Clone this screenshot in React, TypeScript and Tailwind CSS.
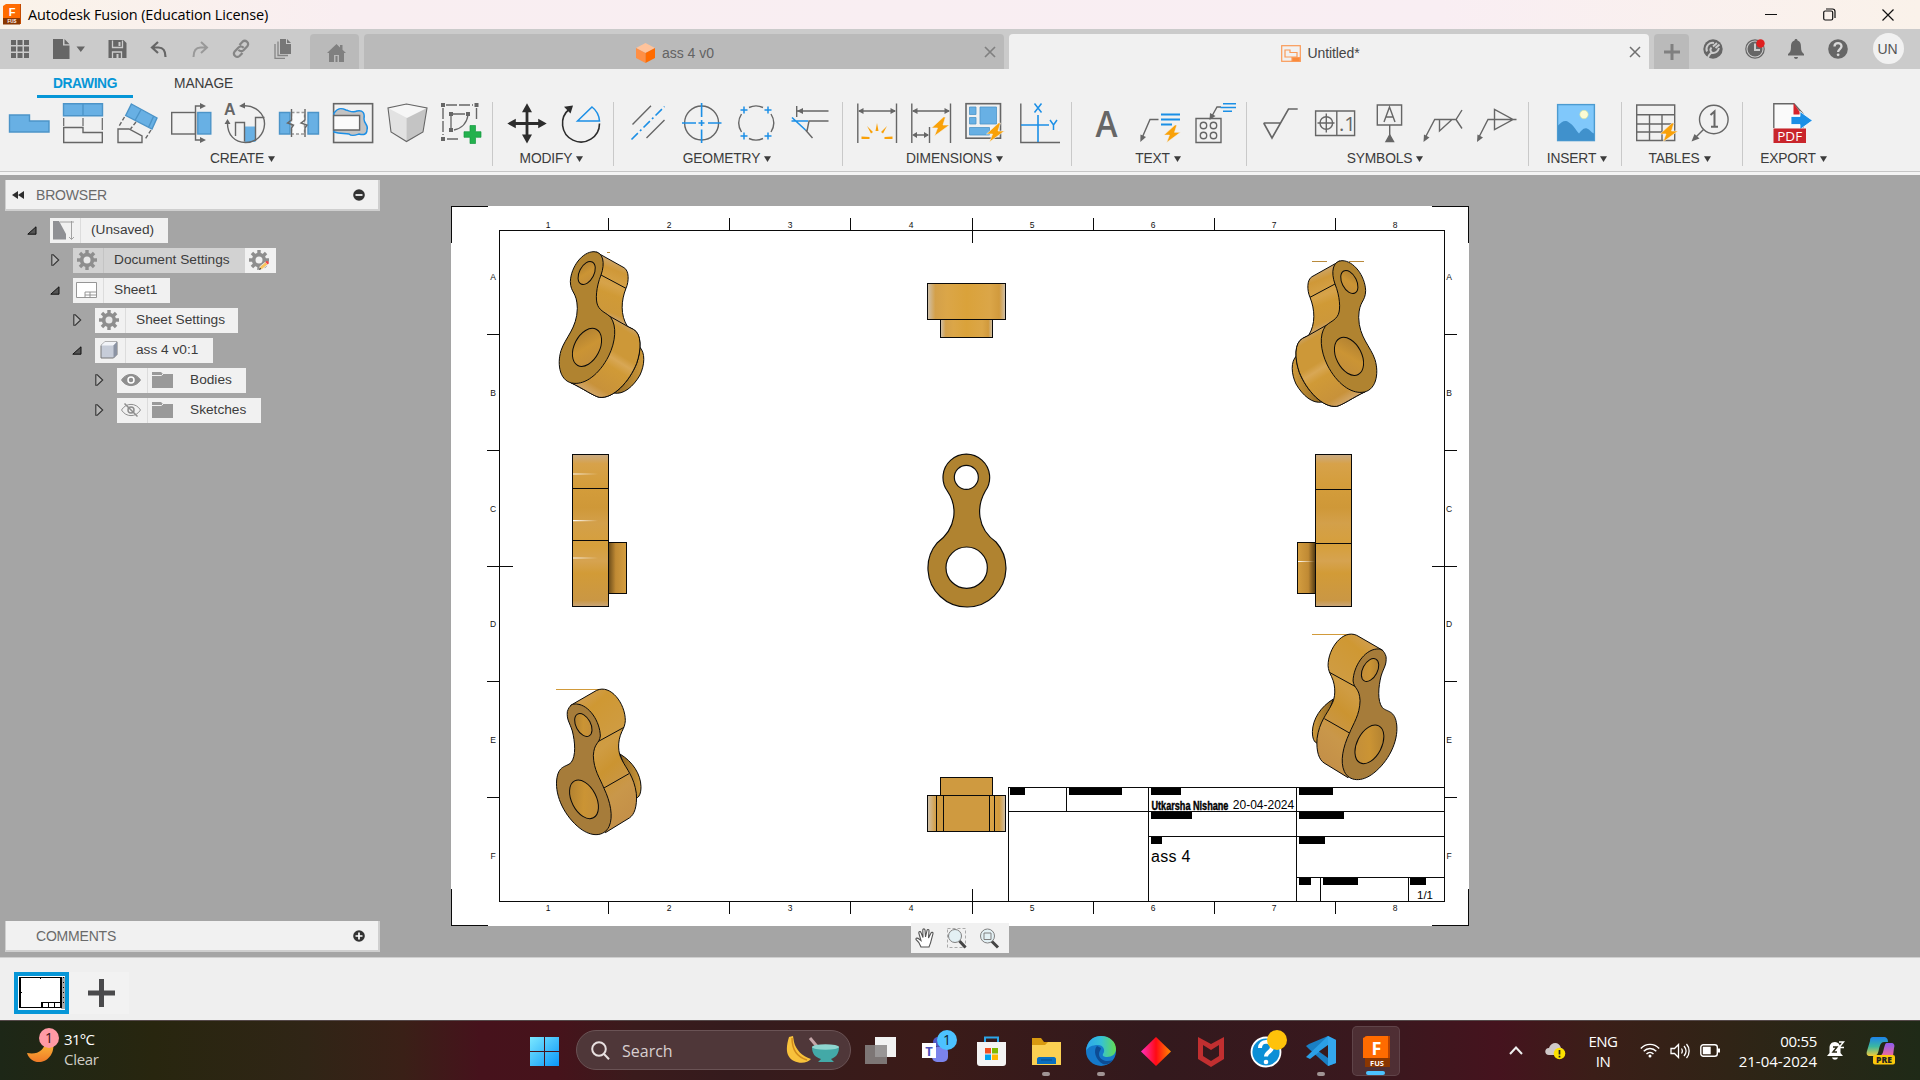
import React from "react";

type Kids = { children?: React.ReactNode };

const G = "#666666";
const B = "#1b8fe6";
const F = "#68b0e4";

/* 40 × 40 ribbon icon centred in its 54px slot */
function Tool({ children }: Kids) {
  return (
    <div className="flex h-[42px] w-[54px] shrink-0 items-center justify-center">
      <svg width="40" height="40" viewBox="0 0 40 40" fill="none" stroke={G} strokeWidth="1.4" className="overflow-visible">
        {children}
      </svg>
    </div>
  );
}

function Group({ label, width, icons = "pl-[7px]", shift = "", last = false, children }: Kids & { label: string; width: string; icons?: string; shift?: string; last?: boolean }) {
  return (
    <div className={`${width} ${last ? "" : "border-r"} h-16 shrink-0 border-[#c9c9c9]`}>
      <div className={`flex ${icons}`}>{children}</div>
      <div className={`mt-[5px] flex h-5 items-center justify-center gap-1 text-[13.8px] tracking-[-0.15px] text-[#3c3c3c] ${shift}`}>
        {label}
        <svg width="7" height="6" viewBox="0 0 7 6"><path d="M0 .3h7L3.5 6z" fill="#3c3c3c" /></svg>
      </div>
    </div>
  );
}

const Bolt = ({ x = 0, y = 0, s = 1 }: { x?: number; y?: number; s?: number }) => (
  <path transform={`translate(${x} ${y}) scale(${s})`} d="M13 0 1 11h6L4 19 19 8h-6.5L15 0z" fill="#f9a109" stroke="#f1f1f1" strokeWidth=".6" />
);

function Ribbon() {
  return (
    <div className="flex h-[73px] pl-[1px] pt-[4px]">
      <Group label="CREATE" width="w-[492px]" icons="pl-[1px]" shift="pr-[8px]">
        <Tool><path d="M.5 12h20v6H40v11H.5z" fill={F} stroke="#4c94c8" /></Tool>
        <Tool>
          <path d="M.5.8h39v12H.5zM20 .8v12" fill={F} stroke="#4c94c8" />
          <path d="M.7 15v8M20 15v8M39.3 15v12" strokeWidth="1.2" />
          <path d="M.7 24.5H20v5h19.3v10H.7z" />
        </Tool>
        <Tool>
          <path d="M14.4 1 40 15l-5 11L8.7 12.5zM23.8 7 18 17.5M36.5 13.5l-5 11" fill={F} stroke="#4c94c8" />
          <path d="M1 26h11l13 7v6.5H1z" />
          <path d="m7.5 14-6 10M19 19l-5.5 7M34 27l-6 9.5" strokeDasharray="4 2" />
        </Tool>
        <Tool>
          <rect x=".7" y="9.5" width="23.8" height="21.5" />
          <rect x="26.8" y="9.5" width="13" height="21.5" fill={F} stroke="#4c94c8" />
          <path d="M32 3h-7.5v34H32" /><path d="m29 0 6 3-6 3zM29 34l6 3-6 3z" fill={G} stroke="none" />
        </Tool>
        <Tool>
          <text x="-1" y="12" fontSize="16" fontWeight="700" fill={G} stroke="none">A</text>
          <path d="M19.5 23.5h11V39h-11z" fill={F} stroke="none" />
          <path d="M16 3c14-2 24 8 23.5 18.5C39 32 31 39.5 20.5 39.5S2 32 2.5 19" />
          <path d="M10.5 33V19.5h9v19M30.5 38V14.5h9" />
          <path d="m14 3 6-3.5v6zM-.5 21l3-5 3 5z" fill={G} stroke="none" />
        </Tool>
        <Tool>
          <path d="M.5 9.500h10.500v21.500H.5zM29 9.500h10.500v21.500H29z" fill={F} stroke="#4c94c8" />
          <path d="M12.500 9.500h13v21.500h-13z" fill="#fafafa" stroke="#999" strokeDasharray="3 2" />
          <path d="M12.500 6v11l-4 3 6 2-2 3v9M26 6v11l-4 3 6 2-2 3v9" />
        </Tool>
        <Tool>
          <rect x=".6" y=".7" width="39" height="38.8" strokeWidth="1.6" />
          <path d="M1 10C5 4 9 5 13 7c4 1 7 3 11 1 6-1 8 2 7 8 0 5 5 6 3 11 0 5-4 5-8 4-3 1-7 3-10 0-4-1-9 0-15-2z" fill="#c3c3c3" stroke={B} />
          <path d="M.6 12.500h26v14.500H.6z" fill="#fbfbfb" />
        </Tool>
        <Tool>
          <path d="M19.500 1 1 5l3 24 15.500 9.500z" fill="#e2e2e2" stroke="none" /><path d="M19.500 1 40 5l-4 24-16.500 9.500z" fill="#c4c4c4" stroke="none" />
          <path d="M19.500 1 1 5l19 10L40 5z" fill="#f6f6f6" stroke="none" />
          <path d="M19.500 1 1 5l3 24 15.500 9.500L36 29l4-24z" strokeWidth="1.1" />
        </Tool>
        <Tool>
          <path d="M5 2h27M2 5v27M35.500 5v12M6 36h13" strokeDasharray="11 2" /><path d="M12 11h12M10 13v12M27 12c-1 7-5 13-14 15" strokeWidth="1.3" />
          <path d="M0 0h4v4H0zM33.500 0h4v4h-4zM0 34h4v4H0zM8 9h4v4H8zM25 9h4v4h-4zM8 25h4v4H8z" fill={G} stroke="none" />
          <path d="M29 22.500h5.500v6.200H40v5.600h-5.500v6.200H29v-6.200h-6v-5.600h6z" fill="#23b14d" stroke="#159a40" strokeWidth=".7" />
        </Tool>
      </Group>
      <Group label="MODIFY" width="w-[121px]" shift="pr-[3px]">
        <Tool>
          <path d="M20 4v33M4 20.500h32" stroke="#2d2d2d" strokeWidth="2.8" />
          <path d="m20 .3 5 9H15zM20 40.500l5-9H15zM.3 20.500l8.500-4.700v9.400zM39.700 20.500l-8.500-4.700v9.400z" fill="#2d2d2d" stroke="none" />
        </Tool>
        <Tool>
          <path d="M38.500 20.500a18.500 18.500 0 1 1-30-14.500" stroke="#2d2d2d" strokeWidth="1.6" /><path d="m3 3.800 9-1.300-2.500 8z" fill="#2d2d2d" stroke="none" />
          <path d="M16.500 18 31 4c4 3 7 8 7.500 14z" stroke={B} strokeWidth="1.5" />
        </Tool>
      </Group>
      <Group label="GEOMETRY" width="w-[229px]" shift="pr-[2px]">
        <Tool><path d="M4.500 21.500 23 2.800M18.500 35l18-18" /><path d="m3.500 36.500 33-33" stroke={B} strokeDasharray="9 3 2 3" strokeWidth="1.6" /></Tool>
        <Tool><circle cx="19.6" cy="20" r="17" /><path d="M19.600 0v14M19.600 26.500V40M0 20h14M26 20h13.500M16.500 20h6M19.600 17v6" stroke={B} strokeWidth="1.6" /></Tool>
        <Tool>
          <path d="M13 4.500a17 17 0 0 1 14 0M35 11a17 17 0 0 1 0 18M27 35.500a17 17 0 0 1-14 0M5.500 29a17 17 0 0 1 0-18" />
          <path d="M8 3.500v7M4.500 7h7M32 3.500v7M28.500 7h7M8 29.500v7M4.500 33h7M32 29.500v7M28.500 33h7" stroke={B} strokeWidth="1.5" />
        </Tool>
        <Tool>
          <path d="M6.700 3v11M7 8h31.500M38.500 18H19l-2 10M15.500 27l7 8" /><path d="m7 8 6-3v6z" fill={G} stroke="none" />
          <path d="M1.500 18H18M2 14.500 15.500 27" stroke={B} strokeWidth="1.6" />
        </Tool>
      </Group>
      <Group label="DIMENSIONS" width="w-[229px]" shift="pr-[5px]">
        <Tool>
          <path d="M.8.5v39.500M39.500.5v39.500M2 8h36" /><path d="m1 8 5.500-3v6zM39 8l-5.500-3v6z" fill={G} stroke="none" />
          <g fill="#f9a109" stroke="none"><path d="M20 20l1.500 8h-3zM10 23l6 6-2 1.500zM30 23l-4 7.500-2-1.500zM4.500 33.500l8 .5v2h-8zM35.500 33.500l-8 .5v2h8z" /></g>
        </Tool>
        <Tool>
          <path d="M.8.5v39.500M39.500.5v39.500M2 8h36M18.500 24v16M3 32h14" /><path d="m1 8 5.500-3v6zM39 8l-5.500-3v6zM1 32l5-3v6zM18 32l-5-3v6z" fill={G} stroke="none" /><Bolt x={19.5} y={14} />
        </Tool>
        <Tool>
          <rect x="1" y=".7" width="34.5" height="34.5" strokeWidth="1.6" />
          <path d="M4.500 4h6.500v7.500H4.500zM4.500 14.500h6.500V21H4.500zM15 4h16.500v17H15zM4.500 24.500h20V32h-20z" fill={F} stroke="#4c94c8" strokeWidth=".8" /><Bolt x={20.5} y={20} />
        </Tool>
        <Tool>
          <path d="M1.800.5v39H41" /><path d="M19 12v27M2 22h28" stroke={B} strokeWidth="1.6" />
          <path d="m15.500.5 7 9M22.500.5l-7 9M31 17l3.500 5 3.500-5M34.500 22v5" stroke={B} strokeWidth="1.5" />
        </Tool>
      </Group>
      <Group label="TEXT" width="w-[175px]" shift="pr-[2px]">
        <Tool><text x="20.5" y="33.5" textAnchor="middle" fontSize="36" fontWeight="600" fill={G} stroke="none" textLength="22" lengthAdjust="spacingAndGlyphs" className="font-['Open_Sans']">A</text></Tool>
        <Tool>
          <path d="m2 35 8-18.500h8.500" /><path d="m.3 39 .2-7.500 5.500 2.500z" fill={G} stroke="none" />
          <path d="M21 11.500h19M21 16.500h19M21 21.500h11" stroke={B} strokeWidth="2" /><Bolt x={23} y={22} s={0.92} />
        </Tool>
        <Tool>
          <path d="M2 15.500h25v24H2zM27 4h-4l-5 9" /><path d="m15.500 17 .5-7 5.500 3z" fill={G} stroke="none" />
          <circle cx="9.5" cy="22.5" r="3.2" /><circle cx="19.5" cy="22.5" r="3.2" /><circle cx="9.5" cy="32.5" r="3.2" /><circle cx="19.5" cy="32.5" r="3.2" />
          <path d="M29 .8h13M26.500 4.500h15.500M29 8.200h9" stroke={B} strokeWidth="1.5" />
        </Tool>
      </Group>
      <Group label="SYMBOLS" width="w-[282px]" shift="pr-[5px]">
        <Tool><path d="M2.700 20h17M2.700 20 11 35 27.500 6h9.200" strokeWidth="1.6" /></Tool>
        <Tool>
          <path d="M.6 8h39v24.500H.6zM21.800 8v24.500M2.500 20h17M11.300 10.500v19" /><circle cx="11.3" cy="20" r="6.3" />
          <text x="24" y="28" fontSize="20" fill={G} stroke="none" className="font-['Open_Sans']">.1</text>
        </Tool>
        <Tool><path d="M8.300 2h24.300v20H8.300zM20.700 22v12M15 19l5.500-15L26 19M17 14h7" /><path d="m17 38.500 3.700-6.500 3.800 6.500z" fill={G} /></Tool>
        <Tool><path d="m2 35 9.700-18.500H33L39 7M33 16.500l6 9M16.500 17v11l12-11" /><path d="m.5 39 .5-7.500 5.500 3z" fill={G} stroke="none" /></Tool>
        <Tool><path d="m1.500 35 9.500-18.500h28.500M17.500 6.500v20l18.500-10z" /><path d="m0 39 .5-7.500 5.500 3z" fill={G} stroke="none" /></Tool>
      </Group>
      <Group label="INSERT" width="w-[93px]" icons="pl-[20px]" shift="pl-[4px]">
        <Tool>
          <rect x="1.6" y="1.6" width="36.8" height="36" fill="#80c8fb" stroke="#4c9bd0" /><circle cx="28" cy="11.5" r="4.2" fill="#fbfbd4" stroke="#cfe0a0" strokeWidth=".6" />
          <path d="M2 22.500c4-4 7-6 11-3 5 3 7 8 10 11 2-2 4-6 8-5 3 1 4 4 7 5v7H2z" fill="#4091cc" stroke="none" />
        </Tool>
      </Group>
      <Group label="TABLES" width="w-[121px]" icons="pl-[6px]" shift="pr-[5px]">
        <Tool><path d="M1.700 2h38v35.500h-38zM1.700 11.800h38M1.700 21h38M1.700 29h38M14.500 11.800v25.700M27 11.800v25.700" /><Bolt x={24} y={20} /></Tool>
        <Tool>
          <circle cx="24.8" cy="16.5" r="14.3" /><path d="M14.500 26.500 5 36" /><path d="m2.500 38.500 3-7.500 5 4.500z" fill={G} stroke="none" />
          <path d="m21.500 12 4-3.500v15M22 23.800h7" strokeWidth="2" />
        </Tool>
      </Group>
      <Group label="EXPORT" width="w-[98px]" icons="pl-[22px]" shift="pl-[3px]" last>
        <Tool>
          <path d="M1.800 25V.8H22l9 10V25" fill="#fafafa" /><path d="M21.500 0v11.500h8z" fill="#d8232a" stroke="none" />
          <path d="M19 13.500h9V8.500l12.500 9-12.500 9v-5h-9z" fill="#1b8fe6" stroke="#fff" strokeWidth=".8" />
          <path d="M1.500 25.500H34V40H1.500z" fill="#c9252b" stroke="none" />
          <text x="17.7" y="37.8" fontSize="13.5" textAnchor="middle" fill="#fff" stroke="none" className="font-['Open_Sans']">PDF</text>
        </Tool>
      </Group>
    </div>
  );
}

const QIcon = ({ children }: Kids) => (
  <div className="flex w-[41.5px] items-center justify-center">
    <svg width="20" height="20" viewBox="0 0 20 20" fill="none">{children}</svg>
  </div>
);

function TabBar() {
  return (
    <div className="flex h-10 items-start bg-[#cbcbcb]">
      <div className="flex h-10 w-[310px] items-center">
        <div className="flex w-10 justify-center">
          <svg width="18" height="18" viewBox="0 0 18 18" fill="#666"><path d="M0 0h5v5H0zM6.500 0h5v5h-5zM13 0h5v5h-5zM0 6.500h5v5H0zM6.500 6.500h5v5h-5zM13 6.500h5v5h-5zM0 13h5v5H0zM6.500 13h5v5h-5zM13 13h5v5h-5z" /></svg>
        </div>
        <div className="w-[56px] pl-[13px]">
          <svg width="33" height="20" viewBox="0 0 33 20" fill="#666"><path d="M0 0h10v6.500h6.500V20H0zM11.500 0l5 5.200h-5zM23.500 7.500h8.500l-4.200 5.500z" /></svg>
        </div>
        <QIcon><path d="M1.500 1h15l3 3v15h-18z" fill="#666" /><path d="M5.500 1.500v7h10v-7M5.500 19v-6h9v6" stroke="#cbcbcb" strokeWidth="1.3" /><path d="M11.500 3h2v4h-2zM9.500 15h2v4h-2z" fill="#cbcbcb" /></QIcon>
        <QIcon><path d="M10 3 4 8.500l6 5.500M4.500 8.500h6c5 0 7 4 7 9.500" stroke="#666" strokeWidth="2.2" /></QIcon>
        <QIcon><path d="m11 3 6 5.500L11 14M16.500 8.500h-6c-5 0-7 4-7 9.500" stroke="#999" strokeWidth="2" /></QIcon>
        <QIcon><path d="m8.500 6 3-3.300c3-2.500 7 1 5 4.300l-4 4.200c-1.500 1.500-4 1.300-5-.4M11.500 14l-3 3c-3 2.500-7-1-5-4.300l4-4.200c1.500-1.500 4-1.300 5 .4" stroke="#858585" strokeWidth="2.2" /></QIcon>
        <QIcon><path d="M7 0h6v5h5v10H7zM14 0l4 4h-4z" fill="#777" /><path d="M5 2.500v14h10M2 5v14.300h10" stroke="#858585" strokeWidth="1.3" /></QIcon>
      </div>
      <div className="mt-[5px] flex h-[35px] w-[49px] items-center justify-center rounded-t-[4px] bg-[#bababa] pl-[3px] pt-[3px]">
        <svg width="19" height="18" viewBox="0 0 19 18" fill="#808080"><path d="M9.500 0 0 9h2v9h5v-7h5v7h5V9h2L15.500 5.700V1H13v2.500zM8.500 12h2v6h-2z" /></svg>
      </div>
      <div className="ml-[5px] mt-[5px] flex h-[35px] w-[640px] items-center rounded-t-[4px] bg-[#bababa] pt-[3px]">
        <div className="flex flex-1 items-center justify-center gap-[7px] pl-[2px] text-sm text-[#636363]">
          <svg width="19" height="20" viewBox="0 0 19 20"><path d="m9.500 0 9.500 5-9.500 5L0 5z" fill="#ffc39b" /><path d="M0 5l9.500 5v10L0 15z" fill="#ff8f45" /><path d="m19 5-9.500 5v10l9.500-5z" fill="#ff6b00" /></svg>
          ass 4 v0
        </div>
        <svg className="mb-[2px] mr-[8px]" width="12" height="12" viewBox="0 0 12 12"><path d="m1 1 10 10M11 1 1 11" stroke="#808080" strokeWidth="1.7" /></svg>
      </div>
      <div className="ml-[5px] mt-[5px] flex h-[35px] w-[640px] items-center rounded-t-[4px] bg-[#f1f1f1] pt-[3px]">
        <div className="flex flex-1 items-center justify-center gap-[6px] pl-[3px] text-sm tracking-[-0.1px] text-[#454545]">
          <svg width="20" height="17" viewBox="0 0 20 17" fill="none" stroke="#fa9a57" strokeWidth="1.2"><rect x=".7" y=".7" width="18.6" height="15.6" /><path d="M4 5h5v2.500h7V12H4z" /><path d="M11 12.500h8v4h-8z" fill="#fa8a3c" /></svg>
          Untitled*
        </div>
        <svg className="mb-[2px] mr-[8px]" width="12" height="12" viewBox="0 0 12 12"><path d="m1 1 10 10M11 1 1 11" stroke="#707070" strokeWidth="1.5" /></svg>
      </div>
      <div className="ml-[5px] mt-[5px] flex h-[35px] w-[35px] items-center justify-center rounded-t-[4px] bg-[#bababa]">
        <svg width="16" height="16" viewBox="0 0 16 16"><path d="M8 0v16M0 8h16" stroke="#808080" strokeWidth="3" /></svg>
      </div>
      <div className="flex h-10 items-center pl-[3.5px]">
        <QIcon><circle cx="10" cy="10" r="9.7" fill="#666" /><path d="M4 12.500C2 8 6 2.500 11 4M16.500 5.500 12.500 9M14 4l-4 3.500M8.500 8.500c-2 2-1 5 1.500 5.500 3 0 5-2 6-5M9 13c-2 2-4 3-4 6" stroke="#cbcbcb" strokeWidth="2" /></QIcon>
        <QIcon><circle cx="10" cy="10" r="9.2" stroke="#666" strokeWidth="1.2" /><circle cx="10" cy="10" r="7.5" fill="#666" /><path d="M10 4.500V11h5" stroke="#cbcbcb" strokeWidth="2" /><circle cx="15.5" cy="4.5" r="4.2" fill="#e02020" /></QIcon>
        <QIcon><path d="M10 0c-1 0-1.500.6-1.500 1.500C5.500 2.500 5 5 5 8c0 4-1 5.500-3 7v1.500h16V15c-2-1.500-3-3-3-7 0-3-.5-5.500-3.500-6.500C11.500.6 11 0 10 0zM8 18h4c0 2.500-4 2.500-4 0z" fill="#666" /></QIcon>
        <QIcon><circle cx="10" cy="10" r="9.8" fill="#666" /><path d="M6.500 7.500C6.500 3 13.500 3 13.500 7.300c0 2.700-3.400 2.800-3.400 5.700" stroke="#d9d9d9" strokeWidth="2.3" /><circle cx="10.1" cy="15.8" r="1.4" fill="#d9d9d9" /></QIcon>
      </div>
      <div className="ml-[14px] mt-[4px] flex h-[31px] w-[31px] items-center justify-center rounded-full bg-[#f1f1f1] pr-px text-sm text-[#555]">UN</div>
    </div>
  );
}

/* ---------- browser tree ---------- */

const Gear = ({ edit = false }: { edit?: boolean }) => (
  <svg width="20" height="20" viewBox="0 0 20 20">
    <g fill="#8e8e8e"><path d="M8.300 0h3.400v20H8.300zM0 8.300h20v3.400H0z" /><path d="M8.300 0h3.400v20H8.300zM0 8.300h20v3.400H0z" transform="rotate(45 10 10)" /><circle cx="10" cy="10" r="7.2" /></g>
    <circle cx="10" cy="10" r="3.5" fill={edit ? "#f1f1f1" : "#e8e8e8"} />
    {edit && <g transform="translate(1 1)"><path d="m9 19 1-3.500L15.500 11l2.200 2.500L12.500 18z" fill="#f8c35c" stroke="#f1f1f1" strokeWidth=".8" /><path d="m15.300 11 1.200-1c1.300-.5 2.700 1 2.200 2.200l-1 1.200z" fill="#ef4444" /><path d="m9 19 .8-2.400 1.600 1.500z" fill="#333" /></g>}
  </svg>
);
const Folder = () => <svg width="21" height="16" viewBox="0 0 21 16"><path d="M0 0h9l2 2h10v14H0z" fill="#999" /><path d="M0 3.500h9.500L11 2" stroke="#efefef" fill="none" /></svg>;
const Eye = ({ off = false }: { off?: boolean }) => (
  <svg width="20" height="14" viewBox="0 0 20 14" fill="none">
    <path d="M.5 7C5-.5 15-.5 19.500 7 15 14.500 5 14.500.5 7z" fill={off ? "none" : "#8e8e8e"} stroke="#8e8e8e" />
    <circle cx="10" cy="7" r="3" stroke={off ? "#8e8e8e" : "#fff"} strokeWidth="1.5" />
    {off && <path d="m3.500.5 13 13" stroke="#8e8e8e" strokeWidth="1.5" />}
  </svg>
);
const DocIcon = () => <svg width="21" height="19" viewBox="0 0 21 19"><path d="M0 0h6l7 13v5.500H0z" fill="#8f9094" /><path d="M7 1h14M18.500 0v18M16 16l2.500 2.500L21 16" stroke="#9a9a9a" strokeWidth=".9" fill="none" /></svg>;
const SheetIcon = () => <svg width="21" height="16" viewBox="0 0 21 16" fill="#fff" stroke="#8a8a8a" strokeWidth=".9"><path d="M.5.5h20v15H.5zM9 15.500V10h11.500M9 13h11.500M14 10v5.500" /></svg>;
const CubeIcon = () => <svg width="18" height="18" viewBox="0 0 18 18"><path d="M1 4.500 5 .8h12v12.700L13.500 17H1z" fill="#c6ccd8" stroke="#777" /><path d="M1 4.500 5 .8h12l-3.500 3.700z" fill="#f2f4f8" /><path d="m13.500 4.500 3.500-3.700v12.700L13.500 17z" fill="#8b93a3" /></svg>;

function Arrow({ open }: { open: boolean }) {
  return open ? (
    <svg width="10" height="9" viewBox="0 0 10 9"><path d="M9 .8v7.400H.8z" fill="#555" stroke="#111" /></svg>
  ) : (
    <svg width="9" height="12" viewBox="0 0 9 12"><path d="M.8.8v10.400h1.500L7.700 6 2.300.8z" fill="#b5b5b5" stroke="#333" strokeWidth="1.1" /></svg>
  );
}

function Row({ pad, open, icon, second, label, width, grey, extra }: { pad: string; open: boolean; icon: React.ReactNode; second?: React.ReactNode; label: string; width: string; grey?: boolean; extra?: React.ReactNode }) {
  return (
    <div className={`flex h-[30px] items-center ${pad}`}>
      <div className={`w-[23px] ${open ? "" : "pl-px"}`}><Arrow open={open} /></div>
      <div className={`flex h-[25px] items-center ${width} ${grey ? "bg-[#d2d2d2]" : "bg-[#f1f1f1]"}`}>
        <div className={`flex h-full w-[31px] items-center justify-center border-r pr-[3px] ${grey ? "border-[#c4c4c4]" : "border-[#dcdcdc]"}`}>{icon}</div>
        {second && <div className="w-[32px] pl-[4px]">{second}</div>}
        <span className="whitespace-nowrap pl-[10px] text-[13.7px] text-[#3c3c3c]">{label}</span>
      </div>
      {extra && <div className="flex h-[25px] w-[31px] items-center justify-center bg-[#f1f1f1] pr-[3px]">{extra}</div>}
    </div>
  );
}

function Panel({ title, chevron, minus }: { title: string; chevron?: boolean; minus?: boolean }) {
  return (
    <div className="flex h-[31px] w-[375px] items-center border-b-2 border-r-2 border-l border-[#cfcfcf] bg-[#f1f1f1] text-sm tracking-[-0.2px] text-[#6a6a6a]">
      <div className="w-[30px] pl-[6px]">
        {chevron && <svg width="12" height="8" viewBox="0 0 12 8"><path d="M6 0v8L0 4zM12 0v8L6 4z" fill="#2d2d2d" /></svg>}
      </div>
      <div className="flex-1 pt-px">{title}</div>
      <svg className="mr-[13px] mt-px" width="12" height="12" viewBox="0 0 12 12"><circle cx="6" cy="6" r="5.8" fill="#333" /><path d={minus ? "M2.5 6h7" : "M2.5 6h7M6 2.5v7"} stroke="#fff" strokeWidth="1.7" /></svg>
    </div>
  );
}

/* ---------- drawing sheet ---------- */

const INK = "#0a0a0a";

function UpperIso() {
  return (
    <g stroke={INK} strokeWidth="3" strokeLinejoin="round">
      <path d="M598 440C617 458 614 495 600 525C580 560 550 585 522 579L510 560Z" fill="url(#boss)" />
      <path d="M468 156L552 203C568 212 567 245 558 265C543 302 541 345 562 379L580 388C606 402 604 450 590 490C568 545 520 597 478 592C460 588 430 566 392 548L420 300Z" fill="url(#neck)" />
      <path d="M490 338L566 381L580 388C606 402 604 450 590 490C568 545 520 597 478 592C460 588 430 566 392 548Z" fill="url(#side)" stroke="none" />
      <path d="M483 225L558 265M490 338L566 381L580 388C606 402 604 450 590 490C568 545 520 597 478 592C460 588 430 566 392 548" fill="none" />
      <path d="M462 155C490 155 496 190 483 225C468 262 466 300 473 316C481 335 502 340 512 352C531 378 527 425 506 468C477 525 435 553 402 550C360 547 350 495 363 452C376 412 411 385 412 325C411 275 392 280 391 245C393 200 427 155 462 155Z" fill="#b08330" />
      <ellipse cx="440" cy="219" rx="22" ry="37" transform="rotate(27 440 219)" fill="url(#bore)" />
      <ellipse cx="441" cy="442" rx="38" ry="61" transform="rotate(27 441 442)" fill="url(#bore)" />
    </g>
  );
}

function LowerIso() {
  return (
    <g stroke={INK} strokeWidth="3" strokeLinejoin="round">
      <path d="M540 402C578 425 602 462 603 500C603 520 598 532 588 535L560 460Z" fill="url(#boss)" />
      <path d="M392 256L470 211C512 192 556 250 556 302C555 315 552 322 546 334C531 365 534 400 546 420C560 448 582 470 589 520C592 560 583 584 568 594L496 638L430 400Z" fill="url(#side2)" />
      <path d="M472 366L552 322M490 505L567 461" fill="none" />
      <path d="M410 252C448 255 480 305 481 348C478 372 462 368 460 407C461 450 480 475 492 505C511 545 521 590 507 620C492 650 455 652 420 625C375 590 345 530 350 480C355 435 378 442 393 428C409 408 405 365 397 333C388 305 380 300 382 275C388 255 398 251 410 252Z" fill="#a67c3a" />
      <ellipse cx="430" cy="315" rx="22" ry="37" transform="rotate(-28 430 315)" fill="url(#bore)" />
      <ellipse cx="432" cy="538" rx="37" ry="62" transform="rotate(-27 432 538)" fill="url(#bore)" />
    </g>
  );
}

const cols = [548, 669, 790, 911, 1032, 1153, 1274, 1395];
const colTicks = [608.5, 729.5, 850.5, 1093.5, 1214.5, 1335.5];
const rows: [string, number][] = [["A", 277], ["B", 393], ["C", 509], ["D", 624], ["E", 740], ["F", 856]];
const rowTicks = [334.5, 450.5, 681.5, 797.5];
const bars: [number, number, number][] = [
  [1010, 788, 15], [1069, 788, 53], [1151, 788, 30], [1299, 788, 34],
  [1151, 812, 41], [1299, 812, 45], [1151, 837, 11], [1299, 837, 26],
  [1299, 878, 12], [1323, 878, 35], [1410, 878, 16],
];

function Sheet() {
  return (
    <svg width="1018" height="720" viewBox="451 206 1018 720" className="block bg-white font-['Liberation_Sans']">
      <defs>
        <linearGradient id="neck" gradientUnits="userSpaceOnUse" x1="530" y1="180" x2="470" y2="340"><stop offset="0" stopColor="#cda873" /><stop offset=".18" stopColor="#cf9838" /><stop offset=".45" stopColor="#d6a34a" /><stop offset=".6" stopColor="#d09a36" /><stop offset=".9" stopColor="#cd983a" /><stop offset="1" stopColor="#cda46a" /></linearGradient>
        <linearGradient id="side" gradientUnits="userSpaceOnUse" x1="580" y1="378" x2="450" y2="590"><stop offset="0" stopColor="#c9a576" /><stop offset=".1" stopColor="#cd9838" /><stop offset=".38" stopColor="#cd9838" /><stop offset=".46" stopColor="#d8a755" /><stop offset=".56" stopColor="#d09a37" /><stop offset=".85" stopColor="#c8923a" /><stop offset="1" stopColor="#d6ad78" /></linearGradient>
        <linearGradient id="side2" x1=".2" y1="0" x2=".6" y2="1"><stop offset="0" stopColor="#d1a05a" /><stop offset=".15" stopColor="#cf9833" /><stop offset=".45" stopColor="#cf9c43" /><stop offset=".6" stopColor="#cb9431" /><stop offset=".8" stopColor="#c9974a" /><stop offset="1" stopColor="#c49048" /></linearGradient>
        <linearGradient id="boss"><stop offset="0" stopColor="#8a6322" /><stop offset="1" stopColor="#cf9a3b" /></linearGradient>
        <linearGradient id="bore" x1="0" y1="0" x2="1" y2="1"><stop offset="0" stopColor="#a97b30" /><stop offset=".5" stopColor="#cb9434" /><stop offset="1" stopColor="#c08c3c" /></linearGradient>
        <linearGradient id="v" x2="0" y2="1"><stop offset="0" stopColor="#c9ab85" /><stop offset=".06" stopColor="#d7a24a" /><stop offset=".2" stopColor="#d49d3b" /><stop offset=".35" stopColor="#cf9838" /><stop offset=".45" stopColor="#d3a04a" /><stop offset=".6" stopColor="#d69f3b" /><stop offset=".7" stopColor="#d6a350" /><stop offset=".78" stopColor="#d29b37" /><stop offset=".96" stopColor="#ca9744" /><stop offset="1" stopColor="#c9a77c" /></linearGradient>
        <linearGradient id="h"><stop offset="0" stopColor="#cfc2ae" /><stop offset=".1" stopColor="#d3a04a" /><stop offset=".25" stopColor="#dba648" /><stop offset=".5" stopColor="#daa23a" /><stop offset=".8" stopColor="#dba648" /><stop offset=".92" stopColor="#d19a3d" /><stop offset="1" stopColor="#cfc2ae" /></linearGradient>
        <linearGradient id="l"><stop offset="0" stopColor="#6b4c1a" /><stop offset=".4" stopColor="#c08a34" /><stop offset="1" stopColor="#d49e40" /></linearGradient>
        <linearGradient id="r"><stop offset="0" stopColor="#d49e40" /><stop offset=".6" stopColor="#c08a34" /><stop offset="1" stopColor="#4f3812" /></linearGradient>
        <linearGradient id="streak"><stop offset="0" stopColor="#fff" /><stop offset="1" stopColor="#fff" stopOpacity="0" /></linearGradient>
      </defs>

      <g stroke={INK} strokeWidth="1" fill="none" shapeRendering="crispEdges">
        <path d="M451.500 243V206.500H488M1432 206.500h36.500V243M451.500 889v36.500H488M1432 925.500h36.500V889" />
        <rect x="499.5" y="230.5" width="945" height="671" />
        {colTicks.map((x) => <path key={x} d={`M${x} 218v12M${x} 902v12`} />)}
        {rowTicks.map((y) => <path key={y} d={`M487 ${y}h12M1445 ${y}h12`} />)}
        <path d="M972.500 218v25M972.500 889v25M487 566.500h26M1432 566.500h25" />
        <path d="M1008.500 901V787.500h436M1066.500 788v23M1148.500 788v113M1296.500 788v113M1320.500 878v23M1408.500 878v23M1009 811.500h435M1149 836.500h295M1297 877.500h147" />
      </g>
      <g fontSize="8.5" fill="#111" textAnchor="middle">
        {cols.map((x, i) => <React.Fragment key={x}><text x={x} y="228">{i + 1}</text><text x={x} y="911.3">{i + 1}</text></React.Fragment>)}
        {rows.map(([c, y]) => <React.Fragment key={c}><text x="493" y={y + 3.2}>{c}</text><text x="1449" y={y + 3.2}>{c}</text></React.Fragment>)}
      </g>

      <path d="M607 252.500h3M1312 261.500h15M1349 261.500h15" stroke="#b98a3c" />
      <path d="M556 689.500h44M1312 634.500h38" stroke="#d19a3a" />
      <g transform="translate(440 200) scale(.33333)"><UpperIso /></g>
      <g transform="translate(1496 209) scale(-.33333 .33333)"><UpperIso /></g>
      <g transform="translate(440 620) scale(.33333)"><LowerIso /></g>
      <g transform="translate(1513.4 565) scale(-.33333 .33333)"><LowerIso /></g>

      <g stroke={INK}>
        <rect x="572.5" y="454.5" width="36" height="152" fill="url(#v)" /><rect x="608.5" y="542.5" width="18" height="51" fill="url(#l)" />
        <path d="M572.500 488.500h36M572.500 540.500h36" />
        <path d="M573 473.500h25v1H573zM573 520h25v1.200H573zM573 557.500h25v1H573z" fill="url(#streak)" stroke="none" />
        <rect x="1315.5" y="454.5" width="36" height="152" fill="url(#v)" /><rect x="1297.5" y="542.5" width="18" height="51" fill="url(#r)" />
        <path d="M1315.500 489.500h36M1315.500 543.500h36" /><path d="M1298 561h17v1h-17z" fill="url(#streak)" stroke="none" />
        <rect x="940.5" y="319.5" width="52" height="18" fill="url(#h)" /><rect x="927.5" y="283.5" width="78" height="36" fill="url(#h)" />
        <rect x="940.5" y="777.5" width="52" height="18" fill="#cf9a40" />
        <rect x="927.5" y="795.5" width="78" height="36" fill="url(#h)" /><path d="M937 796h52v35h-52z" fill="#cf9a40" stroke="none" />
        <path d="M936.500 795.500v36M943.500 795.500v36M989.500 795.500v36M994.500 795.500v36" />
      </g>
      <g transform="translate(860 200) scale(.33333)" stroke={INK} strokeWidth="3.5">
        <path d="M262 873A70 70 0 1 1 376 873C349 920 350 985 408 1026A117 117 0 1 1 232 1028C290 985 294 920 262 873Z" fill="#b08330" />
        <circle cx="319" cy="832" r="36" fill="#fff" /><circle cx="320" cy="1103" r="62" fill="#fff" />
      </g>

      {bars.map(([x, y, w]) => <rect key={`${x}-${y}`} x={x} y={y} width={w} height="7" fill="#000" />)}
      <g fill="#000">
        <text transform="translate(1151.5 809.5) scale(.76 1)" fontSize="12" fontWeight="700" stroke="#000" strokeWidth=".4">Utkarsha Nishane</text>
        <text x="1232.8" y="809" fontSize="12">20-04-2024</text>
        <text x="1151" y="862" fontSize="16" textLength="39.5">ass 4</text>
        <text x="1417" y="898.5" fontSize="11.5">1/1</text>
      </g>
    </svg>
  );
}

function NavBar() {
  return (
    <div className="flex h-[30px] w-[98px] items-center gap-[11.5px] bg-[#f1f1f1] pl-[4px]">
      <svg width="20" height="21" viewBox="0 0 20 21" fill="#fff" stroke="#555" strokeWidth="1.1"><path d="M6 19c-1-3-3-6-5-7.500-.5-1.500 1.500-2 3-.5l2 1.500L3.800 5c-.3-1.500 1.700-2 2.200-.5L8 9.500 7.800 2c0-1.500 2-1.500 2.200 0L10.500 9 12 2.500c.3-1.500 2.200-1.200 2 .3L13.500 10l2.500-5c.7-1.300 2.400-.6 2 .7L16 13c-.5 3-1.500 4-2 6z" /></svg>
      <svg width="21" height="21" viewBox="0 0 21 21" fill="none"><path d="M.5.5h18v19H.5z" stroke="#aaa" strokeDasharray="3 2" /><path d="m12.500 13 6 6.500" stroke="#444" strokeWidth="3" /><circle cx="8" cy="8" r="6.5" fill="#e3f0f4" stroke="#808080" /></svg>
      <svg width="21" height="21" viewBox="0 0 21 21" fill="none"><path d="m12.500 13 6.500 6.500" stroke="#444" strokeWidth="3" /><circle cx="8.5" cy="8" r="7" fill="#e3f0f4" stroke="#808080" /><path d="M5 5h7v6.500H5z" stroke="#808080" /></svg>
    </div>
  );
}

function Workspace() {
  return (
    <div className="relative flex h-[782px] flex-col justify-between bg-[#a5a5a5] px-[5px] pb-[5px] pt-[5px]">
      <div>
        <Panel title="BROWSER" chevron minus />
        <div className="pt-[4px]">
          <Row pad="pl-[22px]" open icon={<DocIcon />} label="(Unsaved)" width="w-[118px]" />
          <Row pad="pl-[45px]" open={false} icon={<Gear />} label="Document Settings" width="w-[172px]" grey extra={<Gear edit />} />
          <Row pad="pl-[45px]" open icon={<SheetIcon />} label="Sheet1" width="w-[97px]" />
          <Row pad="pl-[67px]" open={false} icon={<Gear />} label="Sheet Settings" width="w-[143px]" />
          <Row pad="pl-[67px]" open icon={<CubeIcon />} label="ass 4 v0:1" width="w-[118px]" />
          <Row pad="pl-[89px]" open={false} icon={<Eye />} second={<Folder />} label="Bodies" width="w-[129px]" />
          <Row pad="pl-[89px]" open={false} icon={<Eye off />} second={<Folder />} label="Sketches" width="w-[144px]" />
        </div>
      </div>
      <Panel title="COMMENTS" />
      <div className="absolute left-[451px] top-[31px]"><Sheet /></div>
      <div className="absolute left-[911px] top-[748px]"><NavBar /></div>
    </div>
  );
}

/* ---------- taskbar ---------- */

function App55({ children, dot, active }: Kids & { dot?: boolean; active?: boolean }) {
  return (
    <div className="flex h-[60px] w-[55px] justify-center">
      <div className={`relative mt-[5px] flex h-[50px] w-[48px] items-center justify-center ${active ? "rounded-[5px] border border-white/10 bg-white/10" : ""}`}>
        <svg width="36" height="36" viewBox="0 0 36 36" fill="none" className="overflow-visible">{children}</svg>
        {dot && <span className="absolute bottom-0 h-[4px] w-[8px] rounded-full bg-[#a09494]" />}
        {active && <span className="absolute bottom-0 h-[4px] w-[19px] rounded-full bg-[#4cc2ff]" />}
      </div>
    </div>
  );
}

function Taskbar() {
  return (
    <div className="flex h-[60px] border-t border-[#55494a] bg-[linear-gradient(90deg,#1d2717_0%,#28260f_8%,#302516_16%,#3a2017_21%,#46121c_25%,#46131b_29%,#3a1b1c_33%,#351b1d_38%,#3b1b18_48%,#33191d_60%,#3a181e_72%,#45131e_78%,#3b1e18_83%,#302416_90%,#1f2a17_100%)] font-['Open_Sans','Noto_Sans'] text-white">
      <div className="flex w-[516px] pl-[25px] pt-[4px]">
        <svg width="36" height="46" viewBox="0 0 36 46">
          <defs><linearGradient id="moon" x2="0" y2="1"><stop offset="0" stopColor="#fcc53a" /><stop offset="1" stopColor="#ef7a28" /></linearGradient></defs>
          <path d="M28 16c4 22-21 28-26 12 10 2 18-2 19-14z" fill="url(#moon)" />
          <circle cx="24" cy="13" r="10" fill="#ff9aa5" /><text x="24" y="18" textAnchor="middle" fontSize="14" fill="#3a1015">1</text>
        </svg>
        <div className="pl-[3px] pt-[4px] text-[15px] leading-[20px]"><div className="tracking-[-0.7px]">31°C</div><div className="tracking-[-0.3px] text-[#cfcdc6]">Clear</div></div>
      </div>
      <App55>
        <defs><linearGradient id="win" x2="1" y2="1"><stop offset="0" stopColor="#7be8ff" /><stop offset="1" stopColor="#0a96f8" /></linearGradient></defs>
        <path d="M4 4h14v14H4zM19 4h14v14H19zM4 19h14v14H4zM19 19h14v14H19z" fill="url(#win)" />
      </App55>
      <div className="ml-[5px] mt-[9px] flex h-10 w-[275px] items-center rounded-full border border-[#6a5355] bg-[#4f3739] pl-[14px] pr-[10px]">
        <svg width="19" height="19" viewBox="0 0 19 19" fill="none" stroke="#e8e0e0" strokeWidth="2"><circle cx="8" cy="8" r="6.8" /><path d="m13 13 5 5.300" /></svg>
        <span className="flex-1 pl-[12px] pt-[2px] text-[16px] text-[#d8cfd0]">Search</span>
        <svg width="54" height="28" viewBox="0 0 54 28">
          <path d="M3 1l4-1 1 6c2 8 8 14 17 17-3 4-11 5-17 2C-1 20 0 11 3 1z" fill="#f8c23c" /><path d="M6 2c0 11 5 19 15 22" stroke="#d18c1c" strokeWidth="1.5" fill="none" />
          <path d="m24 2 10 12" stroke="#c5a5a8" strokeWidth="3" /><path d="M26 11h27c0 7-3 10-8 12l3 3H32l3-3c-6-2-9-5-9-12z" fill="#43a9a7" /><ellipse cx="39.5" cy="11" rx="13.5" ry="2.8" fill="#8ed6d0" />
        </svg>
      </div>
      <div className="flex pl-[2px]">
        <App55><path d="M12 4h21v20H12z" fill="#f2f2f2" /><path d="M2 12h22v19H2z" fill="#8a8686" fillOpacity=".85" /></App55>
        <App55><circle cx="20" cy="9" r="5" fill="#5159c4" /><rect x="14" y="14" width="16" height="15" rx="5" fill="#7b83eb" /><path d="M4 10h14v15H4z" fill="#fff" /><text x="11" y="22.5" textAnchor="middle" fontSize="13" fontWeight="700" fill="#4b53bc">T</text><circle cx="29" cy="7" r="10" fill="#4cc2ff" /><text x="29" y="12" textAnchor="middle" fontSize="14" fill="#10242e">1</text></App55>
        <App55><path d="M12 9V4.500h13V9" stroke="#2ba5e8" strokeWidth="2" /><path d="M4 9h29v21c0 2-1 3-3 3H7c-2 0-3-1-3-3z" fill="#f4f4f4" /><path d="M12 15h6v5.500h-6z" fill="#f25022" /><path d="M19 15h6v5.500h-6z" fill="#7fba00" /><path d="M12 21.500h6V27h-6z" fill="#00a4ef" /><path d="M19 21.500h6V27h-6z" fill="#ffb900" /></App55>
        <App55 dot><path d="M4 5h9l3 4h17v23H4z" fill="#d99a10" /><path d="M4 12h13l3-3h13v23H4z" fill="#fbd052" /><path d="M9 31v-5c0-1 1-2 2-2h15c1 0 2 1 2 2v5z" fill="#0a6fc0" /><path d="M13 27h11" stroke="#084f8c" /></App55>
        <App55 dot>
          <defs><linearGradient id="edge" x2="1"><stop offset="0" stopColor="#2da6ee" /><stop offset=".5" stopColor="#35c1d6" /><stop offset="1" stopColor="#63dd52" /></linearGradient></defs>
          <circle cx="18" cy="18" r="15" fill="#1579ca" /><path d="M3 18C4 8 10 3 18 3c9 0 15 6 15 13 0 5-4 8-9 8-3 0-5-1-4-3 3-4 0-9-5-9-6 0-10 2-12 6z" fill="url(#edge)" /><path d="M14 13c-4 4-2 14 6 18 4 1 8-1 10-4-8 3-14-1-14-6 0-3 2-4 2-6z" fill="#0d4c94" />
        </App55>
        <App55>
          <defs><linearGradient id="dia"><stop offset="0" stopColor="#ff2fc0" /><stop offset=".5" stopColor="#ff0a14" /><stop offset="1" stopColor="#ff8a00" /></linearGradient></defs>
          <path d="m18 4 15 14.500L18 33 3 18.500z" fill="url(#dia)" />
        </App55>
        <App55><path d="m5 4 13 7 13-7v22l-13 8-13-8zM10 12v11l8 5 8-5V12l-8 5z" fill="#c12f30" fillRule="evenodd" /></App55>
        <App55><circle cx="18" cy="19" r="14.5" fill="#0c8fd6" stroke="#fff" strokeWidth="1.8" /><path d="M12 15c0-8 12-8 12-1 0 5-6 5-6 9.500" stroke="#fff" strokeWidth="4" /><circle cx="18" cy="29" r="2.3" fill="#fff" /><circle cx="29" cy="7" r="10" fill="#ffc20a" /></App55>
        <App55 dot><path d="M25 3 33 7v23l-8 3L6 16l-3-3 3-2z" fill="#1a7fc4" /><path d="M3 24 25 3v9L7 26z" fill="#2b9fe6" /><path d="M25 12v13l-9-6.500z" fill="#361a1d" /><path d="m25 3 8 4v23l-8 3z" fill="#34a7ee" /></App55>
        <App55 active><path d="M7 3h25v31H7z" fill="#b84300" /><path d="M5 5 9 3h21v22H5z" fill="#ff6b00" /><path d="M7 25h25v9H7z" fill="#8a3600" /><text x="18.5" y="22" textAnchor="middle" fontSize="18" fontWeight="700" fill="#fff">F</text><text x="19" y="32.5" textAnchor="middle" fontSize="7.5" fontWeight="700" fill="#fff">FUS</text></App55>
      </div>
      <div className="ml-auto flex items-center pr-[24px]">
        <svg width="14" height="9" viewBox="0 0 14 9" fill="none"><path d="m1 8 6-6.500L13 8" stroke="#eee" strokeWidth="2" /></svg>
        <svg className="ml-[22px]" width="21" height="18" viewBox="0 0 21 18"><path d="M4 13c-5 0-5-7 0-7 2-6 10-7 12 0 4 1 3 7 0 7z" fill="#cfc8c8" /><circle cx="14.5" cy="11.5" r="5.8" fill="#fce100" /><path d="M14.500 8v4.500M14.500 13.700v1.800" stroke="#222" strokeWidth="1.7" /></svg>
        <div className="ml-[21px] w-[32px] text-center text-[15px] leading-5 tracking-[-0.5px]"><div>ENG</div><div>IN</div></div>
        <svg className="ml-[21px]" width="20" height="15" viewBox="0 0 20 15" fill="none" stroke="#fff" strokeWidth="1.4"><path d="M.8 5.500c5-5.500 13.400-5.500 18.400 0M3.700 8.300c3.600-3.800 9-3.800 12.600 0M6.500 11c2-2 5-2 7 0" /><circle cx="10" cy="13" r="1.5" fill="#fff" stroke="none" /></svg>
        <svg className="ml-[10px]" width="20" height="16" viewBox="0 0 20 16" fill="none" stroke="#fff" strokeWidth="1.3"><path d="M1 5.500h3.500l4-4v13l-4-4H1zM11.500 5.500c1 1.500 1 3.500 0 5M14 3c2.500 3 2.500 7 0 10M16.500 1c3.500 4 3.500 10 0 14" /></svg>
        <svg className="ml-[10px]" width="20" height="13" viewBox="0 0 20 13" fill="none" stroke="#fff" strokeWidth="1.4"><rect x=".8" y=".8" width="16.5" height="11.4" rx="2.5" /><path d="M3.500 3.500h6.500v6H3.500z" fill="#fff" /><path d="M19 4.500v4" strokeWidth="2" /></svg>
        <div className="ml-[17px] w-[80px] text-right text-[15px] leading-5"><div className="tracking-[-0.3px]">00:55</div><div className="whitespace-nowrap">21-04-2024</div></div>
        <svg className="ml-[10px]" width="18" height="20" viewBox="0 0 18 20"><path d="M8 1C4 1 2.500 4 2.500 7v5L0 15h16l-2.500-3V7C13 3 11 1 8 1zM5 16.500h6c-1 3-5 3-6 0z" fill="#fff" /><path d="M6 6h4l-4 5h4" stroke="#2a2917" strokeWidth="1.5" fill="none" /><path d="M12 1h4.500L12 6.500h5" stroke="#fff" strokeWidth="1.5" fill="none" /></svg>
        <svg className="ml-[21px]" width="30" height="29" viewBox="0 0 30 29">
          <defs><linearGradient id="cpa" x2="0" y2="1"><stop offset="0" stopColor="#1d83ec" /><stop offset=".5" stopColor="#3bb7a0" /><stop offset="1" stopColor="#f3cb3a" /></linearGradient><linearGradient id="cpb" x2="0" y2="1"><stop offset="0" stopColor="#8c5cf0" /><stop offset="1" stopColor="#f06a9a" /></linearGradient></defs>
          <path d="M7 1h10c4 0 5 2 5 5h-4c-3 0-4 3-5 7-1 5-2 7-6 7H4c-3 0-4-2-3-5L4 5c0-3 1-4 3-4z" fill="url(#cpa)" /><path d="M21 7h4c3 0 4 2 3 5l-1 8H13c4-1 4-4 5-8 1-3 1-5 3-5z" fill="url(#cpb)" />
          <rect x="7" y="19" width="22" height="9.5" rx="2" fill="#fbc80b" /><text x="18" y="26.8" textAnchor="middle" fontSize="8.5" fontWeight="800" fill="#222">PRE</text>
        </svg>
      </div>
    </div>
  );
}

export default function App() {
  return (
    <div className="flex h-[1080px] w-[1920px] flex-col overflow-hidden bg-[#f1f1f1] font-['Liberation_Sans',Arial,sans-serif]">
      <div className="flex h-[29px] items-center bg-[linear-gradient(90deg,#faf3e9_0%,#f9eef1_18%,#f9eef3_75%,#faf2ea_100%)] pl-[3px]">
        <svg width="18" height="21" viewBox="0 0 18 21"><path d="M3 0h15v20H3z" fill="#c24a00" /><path d="M0 2 3 0h14v14H0z" fill="#ff6b00" /><path d="M0 14h17v6.500H0z" fill="#8a3600" /><text x="9" y="12" fontSize="11" fontWeight="700" fill="#fff" textAnchor="middle">F</text><text x="9" y="19" fontSize="4.5" fontWeight="700" fill="#fff" textAnchor="middle">FUS</text></svg>
        <span className="pl-[7px] font-['Open_Sans'] text-[14.5px] tracking-[-0.15px] text-black">Autodesk Fusion (Education License)</span>
        <div className="ml-auto flex items-center pr-[26px]">
          <svg width="12" height="12" viewBox="0 0 12 12"><path d="M0 5.500h12" stroke="#111" /></svg>
          <svg className="ml-[46px] mr-[46px]" width="13" height="13" viewBox="0 0 13 13" fill="none" stroke="#111" strokeWidth="1.2"><rect x=".7" y="3" width="9" height="9" rx="1.5" /><path d="M3 1h6.500c1.500 0 2.500 1 2.500 2.500V10" /></svg>
          <svg width="12" height="12" viewBox="0 0 12 12"><path d="m.5.5 11 11M11.500.5l-11 11" stroke="#111" strokeWidth="1.2" /></svg>
        </div>
      </div>
      <TabBar />
      <div className="flex h-[29px] text-[13.8px] leading-[29px]">
        <div className="ml-[37px] h-full w-[96px] border-b-[3px] border-[#0696d7] text-center font-bold tracking-[-0.35px] text-[#0696d7]">DRAWING</div>
        <div className="ml-[41px] tracking-[-0.1px] text-[#3c3c3c]">MANAGE</div>
      </div>
      <Ribbon />
      <div className="h-[4px] border-t border-[#c6c6c6] bg-[#f4f4f4]" />
      <Workspace />
      <div className="flex h-[63px] items-center border-t border-[#cfcfcf] bg-[#efefef] pl-[14px] pt-[10px]">
        <svg className="-mt-[2px]" width="55" height="42" viewBox="0 0 55 42" fill="none" shapeRendering="crispEdges">
          <rect x="2" y="2" width="51" height="38" fill="#fff" stroke="#0696d7" strokeWidth="4" />
          <path d="M47 5h4v32h-4z" fill="#aaa" /><path d="M6 5.500h41v30H6zM28 35v-4.500h19M34.500 31v4M40.500 31v4M26.500 5v2M6 20.500h2" stroke="#000" strokeWidth="1.5" /><path d="M49.500 5v30" stroke="#000" strokeWidth="1.5" strokeDasharray="1 4" />
        </svg>
        <div className="-mt-[2px] flex h-[42px] w-[60px] items-center justify-center bg-[#f2f2f2] pl-[5px]">
          <svg width="27" height="28" viewBox="0 0 27 28"><path d="M13.500 0v28M0 14h27" stroke="#4a4a4c" strokeWidth="5" /></svg>
        </div>
      </div>
      <Taskbar />
    </div>
  );
}
